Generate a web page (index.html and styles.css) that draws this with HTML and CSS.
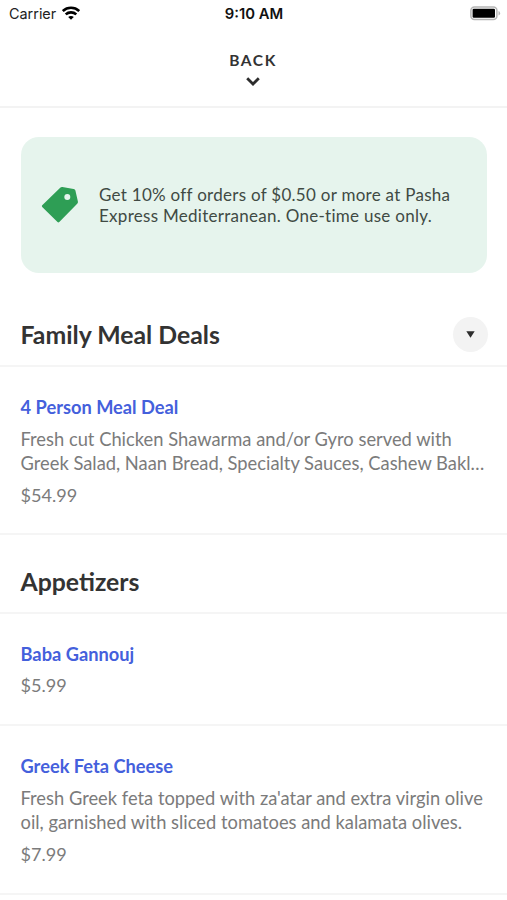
FILE: index.html
```html
<!DOCTYPE html>
<html lang="en"><head><meta charset="utf-8"><title>Menu</title><link rel="stylesheet" href="styles.css"></head>
<body>
<div class="status"><div class="carrier"><span>Carrier</span>
<svg class="wifi" width="18" height="14" viewBox="0 0 18 14"><g fill="none" stroke="#000" stroke-width="2.6"><path d="M.8 5C5.500.700 12.500.700 17.200 5"/><path d="M3.700 8.400c3-2.700 7.600-2.700 10.600 0"/></g><path d="M6.200 11c1.600-1.400 4-1.400 5.600 0L9 13.800z"/></svg></div>
<div class="time">9:10 AM</div>
<svg class="battery" width="31" height="15" viewBox="0 0 31 15"><rect x=".9" y=".9" width="26" height="12.600" rx="3.500" fill="#fff" stroke="#b5b5b5" stroke-width="1.500"/><rect x="2.600" y="2.700" width="22.400" height="9" rx="1.200"/><path d="M28.500 5v4.500q1.600-.6 1.600-2.250T28.500 5z" fill="#b5b5b5"/></svg></div>
<header class="back"><span>BACK</span><svg width="14" height="9" viewBox="0 0 14 9"><path d="M1.200 1.300 7 7l5.800-5.700" fill="none" stroke="#2d2d2d" stroke-width="2.800"/></svg></header>
<main>
<section class="promo"><svg class="tag" width="38" height="38" viewBox="0 0 38 38"><path fill="#2e9e55" d="M1.200 19.300 19.200 1.700q.9-.9 2.200-.7l11.200 1.900q1.500.2 1.800 1.700l2.500 11q.3 1.300-.7 2.200L18.300 36.100q-.9.900-1.800 0L1.200 20.900q-.8-.8 0-1.600z"/><circle cx="26.300" cy="11" r="3" fill="#e6f4ed"/></svg><p>Get 10% off orders of $0.50 or more at Pasha<br>Express Mediterranean. One-time use only.</p></section>
<div class="heading first"><h2>Family Meal Deals</h2><button class="jump" aria-label="Categories"><svg width="9" height="7" viewBox="0 0 9 7"><path d="M.3.300h8.400L4.500 6.800z" fill="#2d2d2d"/></svg></button></div>
<article class="item meal"><h3>4 Person Meal Deal</h3><p class="desc">Fresh cut Chicken Shawarma and/or Gyro served with<br>Greek Salad, Naan Bread, Specialty Sauces, Cashew Bakl…</p><p class="price">$54.99</p></article>
<div class="heading second"><h2>Appetizers</h2></div>
<article class="item baba"><h3>Baba Gannouj</h3><p class="price">$5.99</p></article>
<article class="item feta"><h3>Greek Feta Cheese</h3><p class="desc">Fresh Greek feta topped with za'atar and extra virgin olive<br>oil, garnished with sliced tomatoes and kalamata olives.</p><p class="price">$7.99</p></article>
</main></body></html>
```
FILE: styles.css
```css
* { box-sizing: border-box; margin: 0; padding: 0; }
body { width: 507px; height: 900px; overflow: hidden; background: #fff; color: #333; font-family: Lato, sans-serif; }
.status { height: 28px; display: grid; grid-template-columns: 1fr auto 1fr; align-items: center; padding: 0 6px 0 9px; font: 14.4px Inter, sans-serif; color: #222; }
.carrier { display: flex; align-items: center; gap: 6px; margin-top: -2px; }
.time { font-size: 14.8px; font-weight: 600; transform: translateX(-1px); color: #111; }
.battery { justify-self: end; margin-top: -2px; }
.back { height: 80px; border-bottom: 2px solid #f3f3f3; display: flex; flex-direction: column; align-items: center; padding: 22px 1px 0 0; font-size: 15.5px; line-height: 20px; font-weight: 700; letter-spacing: 1.6px; }
.back svg { margin-top: 7px; }
.promo { margin: 29px 20px 0 21px; height: 136px; border-radius: 18px; background: #e6f4ed; display: flex; align-items: center; gap: 20px; padding-left: 20px; }
.promo p { font-size: 17px; line-height: 21px; white-space: nowrap; letter-spacing: .28px; color: #404a44; }
.heading { display: flex; justify-content: space-between; align-items: center; padding: 0 19px 0 20.5px; border-bottom: 2px solid #f5f5f5; }
.first { height: 94px; padding-top: 30px; }
.second { height: 79px; padding-top: 16px; }
h2 { margin-top: 1px; font-size: 24.8px; line-height: 30px; font-weight: 700; }
.jump { width: 35px; height: 35px; border: 0; border-radius: 50%; background: #f3f3f3; display: grid; place-items: center; }
.item { padding: 28px 0 0 20.5px; border-bottom: 2px solid #f5f5f5; white-space: nowrap; }
.meal { height: 168px; }
.baba { height: 112px; }
.feta { height: 169px; }
h3 { color: #4460dc; font-size: 18.25px; line-height: 24px; font-weight: 700; }
.desc { margin-top: 8px; font-size: 18.33px; line-height: 24px; color: #7b7b7b; }
.price { margin-top: 8px; font-size: 18.1px; line-height: 24px; color: #7b7b7b; }
.baba .price { margin-top: 7px; }
```
